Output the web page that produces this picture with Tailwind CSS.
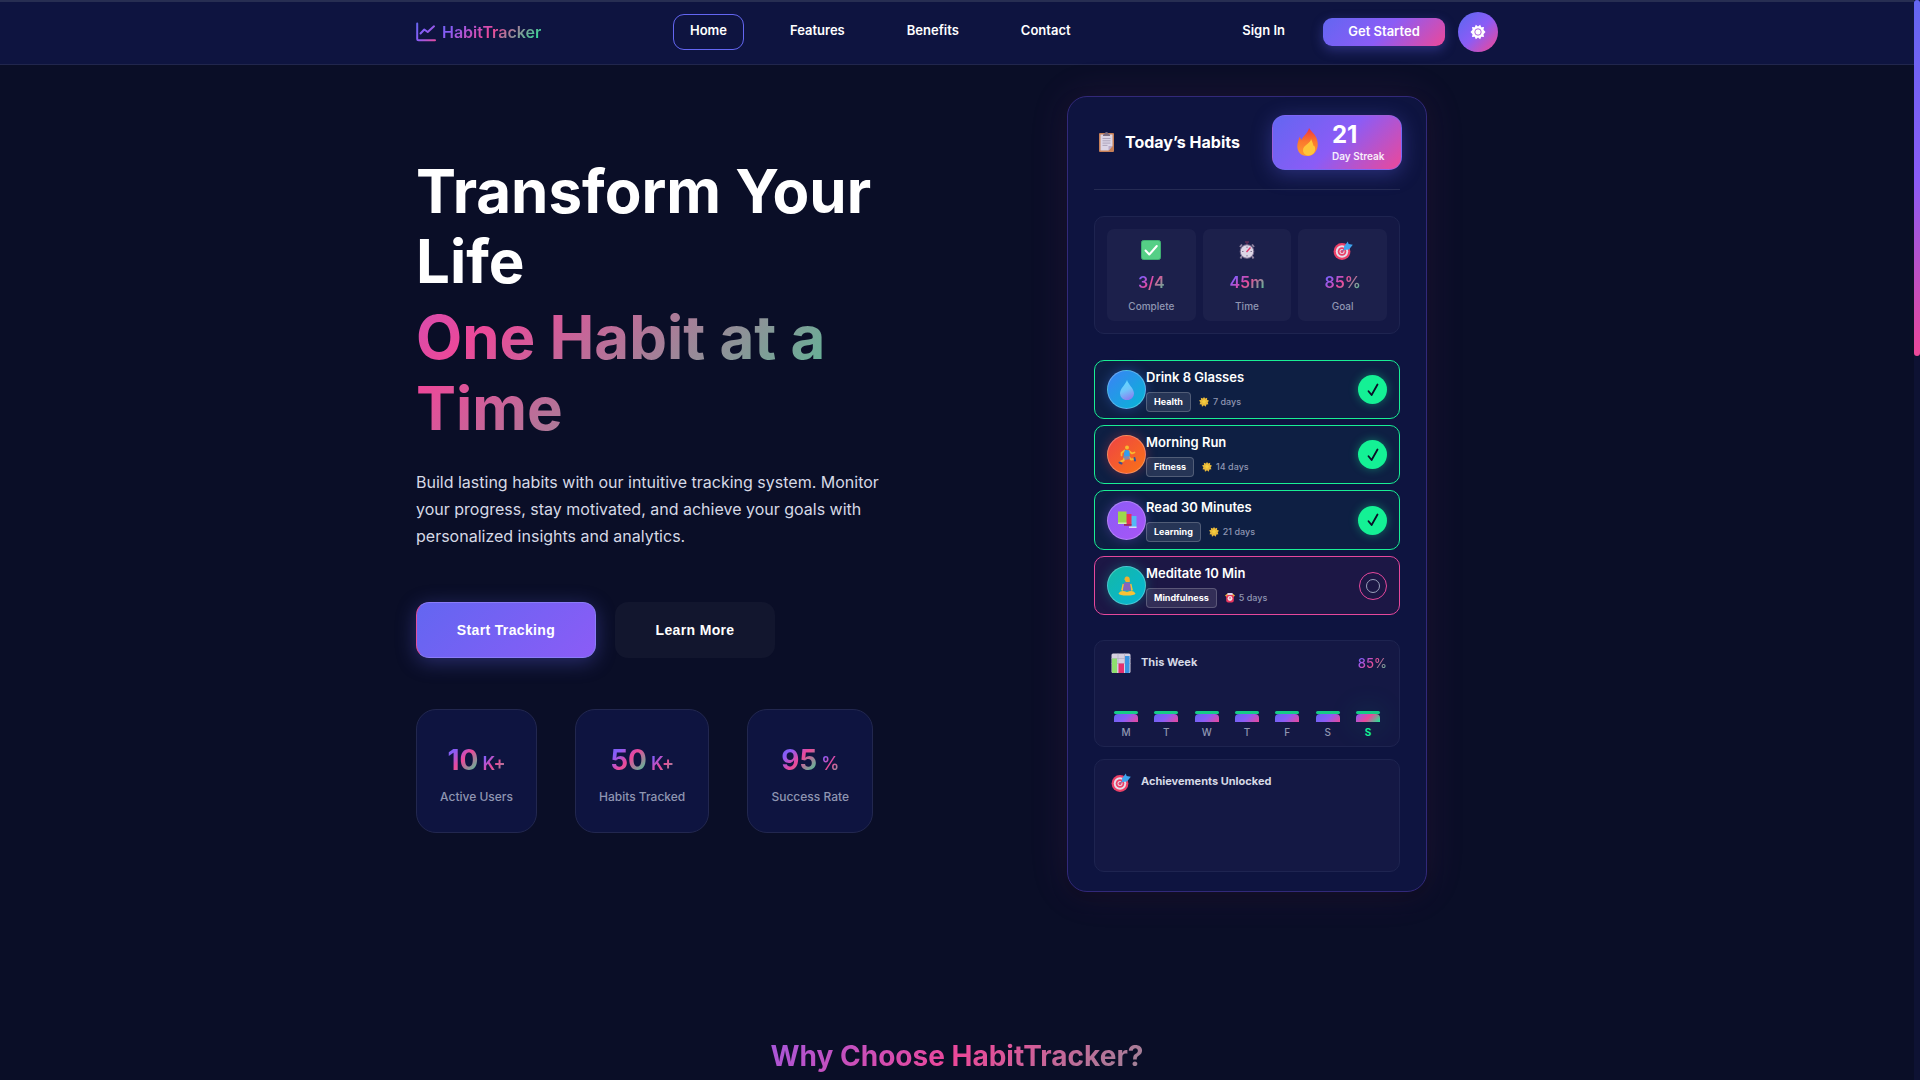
<!DOCTYPE html>
<html lang="en">
<head>
<meta charset="utf-8">
<meta name="viewport" content="width=device-width, initial-scale=1">
<title>HabitTracker</title>
<script src="https://cdn.jsdelivr.net/npm/@tailwindcss/browser@4"></script>
</head>
<body class="min-h-screen overflow-hidden bg-[#0a0e27] pr-[6px] font-[Inter,'Noto_Sans',sans-serif] text-white">

<svg class="absolute size-0" aria-hidden="true">
  <defs>
    <linearGradient id="brand" gradientUnits="userSpaceOnUse" x1="0" y1="0" x2="20" y2="20"><stop offset="0" stop-color="#6366f1"/><stop offset=".5" stop-color="#8b5cf6"/><stop offset="1" stop-color="#ec4899"/></linearGradient>
    <linearGradient id="flame" x1="0" y1="0" x2="0" y2="1"><stop offset="0" stop-color="#f0353f"/><stop offset=".5" stop-color="#fb7a2c"/><stop offset="1" stop-color="#ff9b33"/></linearGradient>
    <linearGradient id="drop" x1=".3" y1="0" x2=".6" y2="1"><stop offset="0" stop-color="#5fd8ff"/><stop offset=".5" stop-color="#70c5fb"/><stop offset="1" stop-color="#8b7df0"/></linearGradient>
    <symbol id="target" viewBox="0 0 20 20">
      <circle cx="9" cy="11.500" r="8.400" fill="#ec4067"/><circle cx="9" cy="11.500" r="6.200" fill="#e6dcea"/><circle cx="9" cy="11.500" r="4.300" fill="#ec4067"/><circle cx="9" cy="11.500" r="2.500" fill="#e6dcea"/><circle cx="9" cy="11.500" r="1.500" fill="#ec4067"/>
      <path d="M9 11.500 15 5.500" stroke="#9d5a9a" stroke-width="1.200"/>
      <path d="M11 6.500 14.800 1.500 15.600 4 19.800 4.800 16 9.500 11 10Z" fill="#3ea4ee"/>
    </symbol>
    <symbol id="star" viewBox="0 0 10 10">
      <path d="M5 0 6.200 1.500 8.200.700 8 2.800 10 3.800 8.700 5.300 9.400 7.300 7.400 7.400 6.700 9.700 5 8.200 3 9.800 2.600 7.500.500 7.300 1.400 5.300 0 3.600 2.100 2.800 1.800.700 3.900 1.500Z" fill="#e9b93a"/><path d="M5 2.500 7 4.500 5 7 3 4.500Z" fill="#f5cf3e"/>
    </symbol>
    <symbol id="tick" viewBox="0 0 12 14">
      <path d="M1.500 8.200 4.600 12 10.500 1.500" fill="none" stroke="#0a0e27" stroke-width="1.800" stroke-linecap="round" stroke-linejoin="round"/>
    </symbol>
  </defs>
</svg>

<div class="h-[2px] bg-[#272e52]"></div>
<header class="border-b border-[#21264d] bg-[#0e1440]">
  <div class="mx-auto flex h-[62px] max-w-[1082px] items-center justify-between pb-[2px]">
    <a href="#" class="flex items-center gap-[6px]">
      <svg class="size-[20px]" viewBox="0 0 20 20" fill="none" stroke="url(#brand)" stroke-width="2" stroke-linecap="round" stroke-linejoin="round"><path d="M1.200 1.500v15.200a1.500 1.500 0 0 0 1.500 1.500H19M4.500 11.500l3.800-4 3.400 2.500L18 4.300"/></svg>
      <span class="bg-[linear-gradient(135deg,#6366f1_0%,#8b5cf6_15%,#ec4899_50%,#14f195_100%)] bg-clip-text text-[16px] font-semibold text-transparent">HabitTracker</span>
    </a>
    <nav class="flex items-center gap-[30px] text-[13px] font-semibold">
      <a href="#" class="flex h-[36px] items-center rounded-[11px] border border-[#6366f1] px-4 pb-[2px]">Home</a>
      <a href="#features" class="px-4 pb-[2px]">Features</a>
      <a href="#" class="px-4 pb-[2px]">Benefits</a>
      <a href="#" class="px-4 pb-[2px]">Contact</a>
    </nav>
    <div class="flex items-center justify-end text-[13px] font-semibold">
      <a href="#" class="mr-[14px] px-6 pb-[2px]">Sign In</a>
      <button class="mr-[13px] h-[28px] w-[122px] rounded-[9px] bg-[linear-gradient(135deg,#6366f1,#8b5cf6_50%,#ec4899)] text-[13px] font-semibold shadow-[0_4px_12px_rgba(99,102,241,0.35)]">Get Started</button>
      <button aria-label="Toggle theme" class="flex size-[40px] items-center justify-center rounded-full bg-[linear-gradient(135deg,#6366f1_10%,#8b5cf6_50%,#ec4899_95%)]">
        <svg class="size-[16px]" viewBox="0 0 16 16"><path d="M8 2.500 10.200.800 11.200 3.200 14 3 13.500 5.700 15.500 8 13.500 10.200 14 13 11.200 12.800 10.200 15.200 8 13.500 5.800 15.200 4.800 12.800 2 13 2.500 10.200.500 8 2.500 5.700 2 3 4.800 3.200 5.800.800Z" fill="#fff"/><circle cx="8" cy="8" r="3.200" fill="none" stroke="#a855d8" stroke-width=".9"/></svg>
      </button>
    </div>
  </div>
</header>

<main>
  <section class="mx-auto grid max-w-[1082px] grid-cols-2 gap-x-[78px] pt-[31px]">
    <div class="pt-[60px]">
      <h1 class="text-[60px] leading-[70px] font-bold">Transform Your Life
        <span class="mt-[6px] block max-w-[463px] bg-[linear-gradient(135deg,#8b5cf6_-45%,#ec4899_15%,#14f195_116%)] bg-clip-text leading-[71px] text-transparent">One Habit at a Time</span>
      </h1>
      <p class="mt-[25px] max-w-[480px] text-[16px] leading-[27px] text-[#d6d9e6]">Build lasting habits with our intuitive tracking system. Monitor your progress, stay motivated, and achieve your goals with personalized insights and analytics.</p>
      <div class="mt-[52px] flex gap-[19px] font-['Liberation_Sans',Arial,sans-serif] text-[14px] font-bold tracking-wide">
        <button class="h-[56px] w-[180px] rounded-[13px] border border-[#8b7cf8] border-l-[#e0509f] bg-[linear-gradient(135deg,#6366f1,#8b5cf6)] shadow-[0_4px_20px_rgba(99,102,241,0.35)]">Start Tracking</button>
        <button class="h-[56px] w-[160px] rounded-[13px] bg-[#12162e]">Learn More</button>
      </div>
      <dl class="mt-[51px] flex gap-[38px] text-center">
        <div class="flex h-[124px] min-w-[121px] flex-col-reverse justify-center rounded-[20px] border border-[#22274f] bg-[#0e1440] px-[23px] pt-[6px]">
          <dt class="mt-[5px] text-[12px] leading-[20px] font-medium text-[#8f96b2]">Active Users</dt>
          <dd class="flex items-baseline justify-center gap-[4px] leading-[36px] font-bold"><span class="bg-[linear-gradient(135deg,#6366f1_0%,#8b5cf6_25%,#ec4899_50%,#14f195_100%)] bg-clip-text text-[28px] text-transparent">10</span><span class="bg-[linear-gradient(135deg,#6366f1_0%,#8b5cf6_25%,#ec4899_50%,#14f195_115%)] bg-clip-text text-[18px] font-semibold text-transparent">K+</span></dd>
        </div>
        <div class="flex h-[124px] min-w-[134px] flex-col-reverse justify-center rounded-[20px] border border-[#22274f] bg-[#0e1440] px-[23px] pt-[6px]">
          <dt class="mt-[5px] text-[12px] leading-[20px] font-medium text-[#8f96b2]">Habits Tracked</dt>
          <dd class="flex items-baseline justify-center gap-[4px] leading-[36px] font-bold"><span class="bg-[linear-gradient(135deg,#6366f1_0%,#8b5cf6_25%,#ec4899_50%,#14f195_100%)] bg-clip-text text-[28px] text-transparent">50</span><span class="bg-[linear-gradient(135deg,#6366f1_0%,#8b5cf6_25%,#ec4899_50%,#14f195_115%)] bg-clip-text text-[18px] font-semibold text-transparent">K+</span></dd>
        </div>
        <div class="flex h-[124px] min-w-[126px] flex-col-reverse justify-center rounded-[20px] border border-[#22274f] bg-[#0e1440] px-[23px] pt-[6px]">
          <dt class="mt-[5px] text-[12px] leading-[20px] font-medium text-[#8f96b2]">Success Rate</dt>
          <dd class="flex items-baseline justify-center gap-[4px] leading-[36px] font-bold"><span class="bg-[linear-gradient(135deg,#6366f1_0%,#8b5cf6_25%,#ec4899_50%,#14f195_100%)] bg-clip-text text-[28px] text-transparent">95</span><span class="bg-[linear-gradient(135deg,#6366f1_0%,#8b5cf6_25%,#ec4899_50%,#14f195_115%)] bg-clip-text text-[18px] font-semibold text-transparent">%</span></dd>
        </div>
      </dl>
    </div>

    <article class="mx-auto w-full max-w-[360px] rounded-[20px] border border-[#32297a] bg-[#0e1440] px-[26px] pt-[18px] pb-[19px] shadow-[0_0_40px_rgba(190,72,170,0.12),0_6px_16px_rgba(0,0,0,0.25)]">
      <div class="flex h-[75px] items-start justify-between border-b border-[#252b53]">
        <div class="flex items-center gap-[10px] pt-[15px] pl-[4px]">
          <svg class="h-[20px] w-[17px]" viewBox="0 0 17 20"><rect x="1" y="1" width="15" height="19" rx="1" fill="#c67f57"/><path d="M2.500 2.500h12V14l-4 4.500h-8Z" fill="#dcd5e6"/><path d="m14.500 14-4 4.500V14Z" fill="#b9abca"/><path d="M5 4V2.500q1 0 1.500-.7Q7 0 8.500 0T10.500 1.800q.5.700 1.500.7V4Z" fill="#7d6d80"/><path d="M4.500 6.500h8m-8 2.300h8m-8 2.300h8m-8 2.300h5" stroke="#a79db5" stroke-width=".9"/></svg>
          <h2 class="text-[16px] leading-[24px] font-bold">Today’s Habits</h2>
        </div>
        <div class="-mr-[2px] flex h-[55px] w-[130px] items-center rounded-[13px] border border-[#7c6cf5]/60 bg-[linear-gradient(135deg,#6366f1,#8b5cf6_50%,#ec4899)] pb-[2px] pl-[24px] shadow-[0_4px_20px_rgba(99,102,241,0.35)]">
          <svg class="h-[28px] w-[22px]" viewBox="0 0 22 28"><path d="M12 0c1.500 3 5 5 7 9 4 8 1 19-8.500 19S-1 20 1 14c.5-2 1-4 1.500-5 1 1 1.500 2 2 3C6 8 11 5 12 0Z" fill="url(#flame)"/><path d="M14 11c0 4-8 6-8 11 0 4 3 5.500 6 5.500s7-3 6-8c-.5-2-1-2-1.500-1.500C16 15 15 13 14 11Z" fill="#ffc53a"/></svg>
          <div class="ml-[13px]">
            <div class="text-[24px] leading-[28px] font-bold">21</div>
            <div class="text-[10px] leading-[14px] font-semibold text-white/90">Day Streak</div>
          </div>
        </div>
      </div>

      <dl class="mt-[26px] grid h-[118px] grid-cols-3 gap-[7px] rounded-[10px] border border-[#1e2450] bg-[#141844] p-[12px] text-center">
        <div class="flex flex-col items-center rounded-[7px] bg-[#1c204b] pt-[11px]">
          <svg class="size-[20px]" viewBox="0 0 20 20"><rect x=".5" y=".5" width="19" height="19" rx="2" fill="#55cf86" stroke="#3fae72"/><path d="m4.500 10.500 3.800 4 7.500-8.500" fill="none" stroke="#fff" stroke-width="2" stroke-linecap="round" stroke-linejoin="round"/></svg>
          <dt class="order-last mt-[7px] text-[10px] leading-[14px] font-medium text-[#8f96b2]">Complete</dt>
          <dd class="mt-[12px] bg-[linear-gradient(135deg,#6366f1_0%,#8b5cf6_20%,#ec4899_50%,#14f195_110%)] bg-clip-text text-[16px] leading-[20px] font-semibold text-transparent">3/4</dd>
        </div>
        <div class="flex flex-col items-center rounded-[7px] bg-[#1c204b] pt-[11px]">
          <svg class="size-[20px]" viewBox="0 0 20 20"><path d="M8 2h4M10 2v3" stroke="#5d2d56" stroke-width="1.500"/><path d="M3 7 5 4.500M17 7l-2-2.500M5 16l-1.500 2.500M15 16l1.500 2.500" stroke="#8d819e" stroke-width="2"/><circle cx="10" cy="11.500" r="6.800" fill="#ddd6e6" stroke="#75688c"/><path d="M10 6.500v1.500M10 15v1.500M5 11.500h1.500M13.500 11.500H15" stroke="#6b5f80" stroke-width=".8"/><path d="m9.500 12 4-4.500" stroke="#e03468" stroke-width="1.300"/></svg>
          <dt class="order-last mt-[7px] text-[10px] leading-[14px] font-medium text-[#8f96b2]">Time</dt>
          <dd class="mt-[12px] bg-[linear-gradient(135deg,#6366f1_0%,#8b5cf6_20%,#ec4899_50%,#14f195_110%)] bg-clip-text text-[16px] leading-[20px] font-semibold text-transparent">45m</dd>
        </div>
        <div class="flex flex-col items-center rounded-[7px] bg-[#1c204b] pt-[11px]">
          <svg class="size-[20px]"><use href="#target"/></svg>
          <dt class="order-last mt-[7px] text-[10px] leading-[14px] font-medium text-[#8f96b2]">Goal</dt>
          <dd class="mt-[12px] bg-[linear-gradient(135deg,#6366f1_0%,#8b5cf6_20%,#ec4899_50%,#14f195_110%)] bg-clip-text text-[16px] leading-[20px] font-semibold text-transparent">85%</dd>
        </div>
      </dl>

      <ul class="mt-[26px] flex flex-col gap-[6px]">
        <li class="flex h-[59px] items-center rounded-[10px] border border-[#19ee95] bg-[#0e1f43] px-[12px]">
          <span class="flex size-[39px] items-center justify-center rounded-full border border-white/25 bg-[linear-gradient(135deg,#3b82f6,#06b6d4)] shadow-[0_0_12px_rgba(59,130,246,0.35)]"><svg class="h-[20px] w-[14px]" viewBox="0 0 14 20"><path d="M7 0c1 4 7 8.500 7 13.500A6.800 6.500 0 0 1 0 13.500C0 8.500 6 4 7 0Z" fill="url(#drop)"/></svg></span>
          <div class="flex-1">
            <h3 class="text-[13px] leading-[18px] font-semibold">Drink 8 Glasses</h3>
            <div class="mt-[6px] flex items-center"><span class="mr-[8px] flex h-[20px] items-center rounded-[4px] border border-white/20 bg-white/10 px-[7px] text-[9px] font-bold">Health</span><svg class="mr-[4px] size-[10px]"><use href="#star"/></svg><span class="text-[9px] font-medium text-[#8f96b2]">7 days</span></div>
          </div>
          <button aria-label="Drink 8 Glasses done" class="flex size-[29px] items-center justify-center rounded-full bg-[#14f195] shadow-[0_0_10px_rgba(20,241,149,0.4)]"><svg class="h-[14px] w-[12px]"><use href="#tick"/></svg></button>
        </li>
        <li class="flex h-[59px] items-center rounded-[10px] border border-[#19ee95] bg-[#0e1f43] px-[12px]">
          <span class="flex size-[39px] items-center justify-center rounded-full border border-white/25 bg-[linear-gradient(135deg,#ef4444,#f97316)] shadow-[0_0_12px_rgba(239,68,68,0.35)]"><svg class="size-[20px]" viewBox="0 0 20 20" fill="none" stroke-linecap="round" stroke-linejoin="round"><path d="M7.500 5.500 4.500 8v2.500M12 6l3 2.500 2.500-1" stroke="#f8b92f" stroke-width="1.700"/><path d="M8 12 6.500 15.500 3 17M12 12l2 2.500 3.500-.5" stroke="#f8b92f" stroke-width="2"/><path d="m2.500 17.500 2 1M17.500 13l.5 2.500" stroke="#3b4e93" stroke-width="2"/><path d="M8.500 5.500 12 6l.2 5.500-5 1Z" fill="#2f9ff1" stroke="#2f9ff1"/><path d="m7 11.500 5-.5 1 3-5.500 1Z" fill="#8a86a8"/><circle cx="10" cy="2.500" r="2" fill="#f8b92f"/></svg></span>
          <div class="flex-1">
            <h3 class="text-[13px] leading-[18px] font-semibold">Morning Run</h3>
            <div class="mt-[6px] flex items-center"><span class="mr-[8px] flex h-[20px] items-center rounded-[4px] border border-white/20 bg-white/10 px-[7px] text-[9px] font-bold">Fitness</span><svg class="mr-[4px] size-[10px]"><use href="#star"/></svg><span class="text-[9px] font-medium text-[#8f96b2]">14 days</span></div>
          </div>
          <button aria-label="Morning Run done" class="flex size-[29px] items-center justify-center rounded-full bg-[#14f195] shadow-[0_0_10px_rgba(20,241,149,0.4)]"><svg class="h-[14px] w-[12px]"><use href="#tick"/></svg></button>
        </li>
        <li class="flex h-[60px] items-center rounded-[10px] border border-[#19ee95] bg-[#0e1f43] px-[12px]">
          <span class="flex size-[39px] items-center justify-center rounded-full border border-white/25 bg-[linear-gradient(135deg,#8b5cf6,#a855f7)] shadow-[0_0_12px_rgba(139,92,246,0.35)]"><svg class="size-[20px]" viewBox="0 0 20 20"><path d="M14 6h5.500v12H14Z" fill="#55b8f5"/><path d="M12 16.500h7.500V18H12Z" fill="#d9dcf4"/><path d="M9 4h5.500v11.500H9Z" fill="#e83059"/><path d="M7 14h7.500v1.800H7Z" fill="#9c2c63"/><path d="M1 1.500h8.500v12H1Z" fill="#9cd84c"/><path d="M1 12.500h8.500V14H1Z" fill="#d3efb0"/></svg></span>
          <div class="flex-1">
            <h3 class="text-[13px] leading-[18px] font-semibold">Read 30 Minutes</h3>
            <div class="mt-[6px] flex items-center"><span class="mr-[8px] flex h-[20px] items-center rounded-[4px] border border-white/20 bg-white/10 px-[7px] text-[9px] font-bold">Learning</span><svg class="mr-[4px] size-[10px]"><use href="#star"/></svg><span class="text-[9px] font-medium text-[#8f96b2]">21 days</span></div>
          </div>
          <button aria-label="Read 30 Minutes done" class="flex size-[29px] items-center justify-center rounded-full bg-[#14f195] shadow-[0_0_10px_rgba(20,241,149,0.4)]"><svg class="h-[14px] w-[12px]"><use href="#tick"/></svg></button>
        </li>
        <li class="flex h-[59px] items-center rounded-[10px] border border-[#e5489c] bg-[#1c1745] px-[12px]">
          <span class="flex size-[39px] items-center justify-center rounded-full border border-white/25 bg-[linear-gradient(135deg,#14b8a6,#06b6d4)] shadow-[0_0_12px_rgba(20,184,166,0.35)]"><svg class="size-[20px]" viewBox="0 0 20 20"><path d="M7.500 3.500C7.500 1 9 .5 10.300.5s2.500 1 2.500 3V6h-4Z" fill="#f2b12c"/><path d="M6.500 8 5 14.500M13.500 8l1.500 6.500" stroke="#f8c235" stroke-width="1.800" fill="none"/><path d="M7 6.500h6l1 8H6Z" fill="#8664bd"/><path d="M1.500 17.500q2.500-4 8.500-1.500 6-2.500 8.500 1.500-1 2-8.500 2t-8.500-2Z" fill="#f8c235"/></svg></span>
          <div class="flex-1">
            <h3 class="text-[13px] leading-[18px] font-semibold">Meditate 10 Min</h3>
            <div class="mt-[6px] flex items-center"><span class="mr-[8px] flex h-[20px] items-center rounded-[4px] border border-white/20 bg-white/10 px-[7px] text-[9px] font-bold">Mindfulness</span><svg class="mr-[4px] size-[10px]" viewBox="0 0 10 10"><path d="M0 2.500 2.500.5h5L10 2.500 8.500 4h-7Z" fill="#f0b83b"/><path d="M2.500 0h5v2h-5Z" fill="#dcd0e8"/><rect x="1.200" y="2" width="7.600" height="7.500" rx="2" fill="#e9365e"/><circle cx="5" cy="5.500" r="2.400" fill="#f4dfe6"/><path d="M5 4v2" stroke="#b33357" stroke-width=".8"/></svg><span class="text-[9px] font-medium text-[#8f96b2]">5 days</span></div>
          </div>
          <button aria-label="Complete Meditate 10 Min" class="flex size-[28px] items-center justify-center rounded-full border border-[#e5489c]"><span class="size-[14px] rounded-full border border-[#9aa0ba]"></span></button>
        </li>
      </ul>

      <section class="mt-[25px] flex h-[107px] flex-col justify-between overflow-hidden rounded-[10px] border border-[#1e2450] bg-[#141844] px-[12px] pt-[12px] pb-[8px]">
        <div class="flex items-start justify-between pl-[4px]">
          <div class="flex gap-[10px]">
            <svg class="size-[20px]" viewBox="0 0 20 20"><rect x=".5" y=".5" width="19" height="19.500" rx="1.500" fill="#d5cfe0"/><path d="M.5 5.500h19M.5 10.500h19M7 .5V10M13.500.5V10" stroke="#b5acc4" stroke-width=".7"/><path d="M1 5.500h5V20H2.500Q1 20 1 18.500Z" fill="#8fe06e"/><path d="M7.500 10.500h5.500V20H7.500Z" fill="#e5306f"/><path d="M14 3h4.500v15.500q0 1.500-1.500 1.500h-3Z" fill="#3a94e2"/></svg>
            <h3 class="text-[11px] leading-[18px] font-bold text-[#d6d9e6]">This Week</h3>
          </div>
          <span class="bg-[linear-gradient(135deg,#6366f1_0%,#8b5cf6_20%,#ec4899_50%,#14f195_110%)] bg-clip-text text-[13px] leading-[20px] font-medium text-transparent">85%</span>
        </div>
        <ol class="flex justify-between px-[7px] text-center text-[10px] leading-[12px] font-medium text-[#8f96b2]">
          <li class="w-[24px]"><div class="h-[3px] rounded-full bg-[#16cc86]"></div><div class="mb-[4px] h-[8px] rounded-t-[4px] bg-[linear-gradient(135deg,#6366f1,#8b5cf6_50%,#ec4899)]"></div>M</li>
          <li class="w-[24px]"><div class="h-[3px] rounded-full bg-[#16cc86]"></div><div class="mb-[4px] h-[8px] rounded-t-[4px] bg-[linear-gradient(135deg,#6366f1,#8b5cf6_50%,#ec4899)]"></div>T</li>
          <li class="w-[24px]"><div class="h-[3px] rounded-full bg-[#16cc86]"></div><div class="mb-[4px] h-[8px] rounded-t-[4px] bg-[linear-gradient(135deg,#6366f1,#8b5cf6_50%,#ec4899)]"></div>W</li>
          <li class="w-[24px]"><div class="h-[3px] rounded-full bg-[#16cc86]"></div><div class="mb-[4px] h-[8px] rounded-t-[4px] bg-[linear-gradient(135deg,#6366f1,#8b5cf6_50%,#ec4899)]"></div>T</li>
          <li class="w-[24px]"><div class="h-[3px] rounded-full bg-[#16cc86]"></div><div class="mb-[4px] h-[8px] rounded-t-[4px] bg-[linear-gradient(135deg,#6366f1,#8b5cf6_50%,#ec4899)]"></div>F</li>
          <li class="w-[24px]"><div class="h-[3px] rounded-full bg-[#16cc86]"></div><div class="mb-[4px] h-[8px] rounded-t-[4px] bg-[linear-gradient(135deg,#6366f1,#8b5cf6_50%,#ec4899)]"></div>S</li>
          <li class="w-[24px] font-bold text-[#14f195]"><div class="h-[3px] rounded-full bg-[#16cc86]"></div><div class="mb-[4px] h-[8px] rounded-t-[4px] bg-[linear-gradient(135deg,#8b5cf6,#ec4899_50%,#14f195)] shadow-[0_0_30px_rgba(20,241,149,0.3)]"></div>S</li>
        </ol>
      </section>

      <section class="mt-[12px] h-[113px] rounded-[10px] border border-[#1e2450] bg-[#141844] px-[16px] pt-[12px]">
        <div class="flex gap-[10px]">
          <svg class="size-[20px]"><use href="#target"/></svg>
          <h3 class="text-[11px] leading-[18px] font-bold text-[#d6d9e6]">Achievements Unlocked</h3>
        </div>
      </section>
    </article>
  </section>

  <section id="features" class="mx-auto max-w-[1082px] pt-[144px]">
    <h2 class="bg-[linear-gradient(135deg,#6366f1_0%,#8b5cf6_25%,#ec4899_50%,#14f195_100%)] bg-clip-text text-center text-[28px] leading-[40px] font-bold text-transparent">Why Choose HabitTracker?</h2>
  </section>
</main>

<div class="fixed inset-y-0 right-0 w-[6px] bg-[#0e1233]" aria-hidden="true"><div class="h-[33%] rounded-[3px] bg-[linear-gradient(180deg,#6366f1,#8b5cf6_50%,#ec4899)]"></div></div>
</body>
</html>
